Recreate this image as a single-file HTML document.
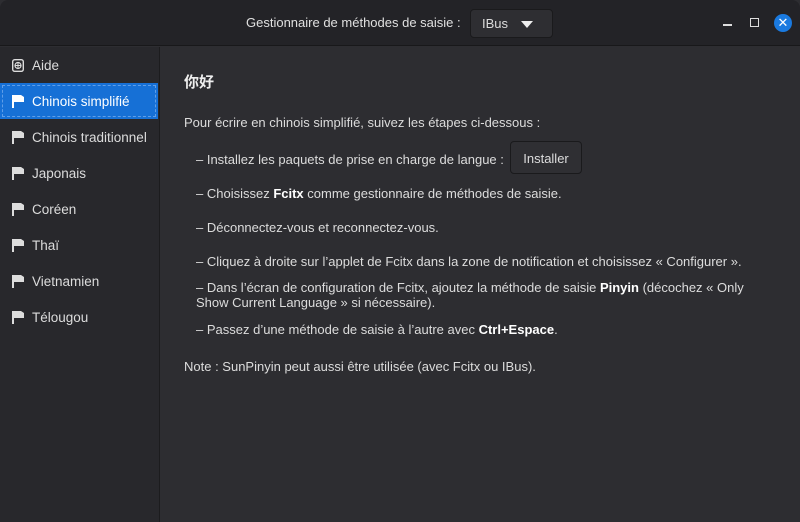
<!DOCTYPE html>
<html><head><meta charset="utf-8"><style>
*{margin:0;padding:0;box-sizing:border-box}
body{width:800px;height:522px;overflow:hidden;background:#2d2d31;font-family:"Liberation Sans","Noto Sans CJK SC",sans-serif;font-size:13px;color:#dcdcdc;position:relative}
.hdr{position:absolute;left:0;top:0;width:800px;height:46px;background:#232327;border-bottom:1px solid #18181a;border-radius:8px 8px 0 0}
.title{position:absolute;left:246px;top:15px;font-size:13px;color:#e0e0e0}
.combo{position:absolute;left:470px;top:9px;width:83px;height:29px;border:1px solid #1a1a1c;border-radius:4px;background:#2e2e32}
.combo span{position:absolute;left:11px;top:6px;font-size:13px}
.combo i{position:absolute;left:50px;top:11px;border-left:6px solid transparent;border-right:6px solid transparent;border-top:7px solid #eee}
.min{position:absolute;left:723px;top:24px;width:9px;height:1.5px;background:#ddd}
.max{position:absolute;left:750px;top:18px;width:9px;height:9px;border:1.5px solid #ddd}
.cls{position:absolute;left:774px;top:14px;width:18px;height:18px;border-radius:50%;background:#1a7ae0;color:#fff;text-align:center;line-height:18px;font-size:13px}
.side{position:absolute;left:0;top:47px;width:160px;height:475px;background:#28282c;border-right:1px solid #1c1c1e}
.item{position:absolute;left:0;width:159px;height:36px;line-height:38px;padding-left:32px;font-size:13.5px;color:#dcdcdc}
.item.sel{background:#1670d6;color:#fff;outline:1px dashed #5f9ee8;outline-offset:-3px;left:0;width:158px}
.flag{position:absolute;left:12px;top:12px;width:12px;height:13px}
.main{position:absolute;left:184px}
.btn{position:absolute;left:510px;top:141px;width:72px;height:33px;border:1px solid #1a1a1c;border-radius:4px;background:#2f2f33;text-align:center;line-height:33px;font-size:13px}
b{color:#fff}
</style></head><body>
<div class="hdr"></div>
<div class="title">Gestionnaire de méthodes de saisie :</div>
<div class="combo"><span>IBus</span><i></i></div>
<div class="min"></div><div class="max"></div><div class="cls">✕</div>
<div class="side">
<div class="item" style="top:0"><svg class="flag" viewBox="0 0 12 13"><rect x="0.7" y="0.7" width="10.6" height="11.6" rx="2" fill="none" stroke="#ddd" stroke-width="1.4"/><circle cx="6" cy="6.5" r="3" fill="none" stroke="#ddd" stroke-width="1.2"/><path d="M3 6.5h6M6 3.5v6" stroke="#ddd" stroke-width="1"/></svg>Aide</div>
<div class="item sel" style="top:36px"><svg class="flag" viewBox="0 0 12 13"><path d="M0 0h2v13H0zM2 0h7l3 2v5H2z" fill="#fff"/></svg>Chinois simplifié</div>
<div class="item" style="top:72px"><svg class="flag" viewBox="0 0 12 13"><path d="M0 0h2v13H0zM2 0h7l3 2v5H2z" fill="#ddd"/></svg>Chinois traditionnel</div>
<div class="item" style="top:108px"><svg class="flag" viewBox="0 0 12 13"><path d="M0 0h2v13H0zM2 0h7l3 2v5H2z" fill="#ddd"/></svg>Japonais</div>
<div class="item" style="top:144px"><svg class="flag" viewBox="0 0 12 13"><path d="M0 0h2v13H0zM2 0h7l3 2v5H2z" fill="#ddd"/></svg>Coréen</div>
<div class="item" style="top:180px"><svg class="flag" viewBox="0 0 12 13"><path d="M0 0h2v13H0zM2 0h7l3 2v5H2z" fill="#ddd"/></svg>Thaï</div>
<div class="item" style="top:216px"><svg class="flag" viewBox="0 0 12 13"><path d="M0 0h2v13H0zM2 0h7l3 2v5H2z" fill="#ddd"/></svg>Vietnamien</div>
<div class="item" style="top:252px"><svg class="flag" viewBox="0 0 12 13"><path d="M0 0h2v13H0zM2 0h7l3 2v5H2z" fill="#ddd"/></svg>Télougou</div>
</div>
<div class="main" style="top:71px;font-size:15px;font-weight:bold;color:#eee">你好</div>
<div class="main" style="top:115px">Pour écrire en chinois simplifié, suivez les étapes ci-dessous :</div>
<div class="main" style="left:196px;top:152px">– Installez les paquets de prise en charge de langue :</div>
<div class="btn">Installer</div>
<div class="main" style="left:196px;top:186px">– Choisissez <b>Fcitx</b> comme gestionnaire de méthodes de saisie.</div>
<div class="main" style="left:196px;top:220px">– Déconnectez-vous et reconnectez-vous.</div>
<div class="main" style="left:196px;top:254px;white-space:nowrap">– Cliquez à droite sur l’applet de Fcitx dans la zone de notification et choisissez « Configurer ».</div>
<div class="main" style="left:196px;top:280px;width:565px;line-height:15px">– Dans l’écran de configuration de Fcitx, ajoutez la méthode de saisie <b>Pinyin</b> (décochez « Only Show Current Language » si nécessaire).</div>
<div class="main" style="left:196px;top:322px">– Passez d’une méthode de saisie à l’autre avec <b>Ctrl+Espace</b>.</div>
<div class="main" style="top:359px">Note : SunPinyin peut aussi être utilisée (avec Fcitx ou IBus).</div>
</body></html>
